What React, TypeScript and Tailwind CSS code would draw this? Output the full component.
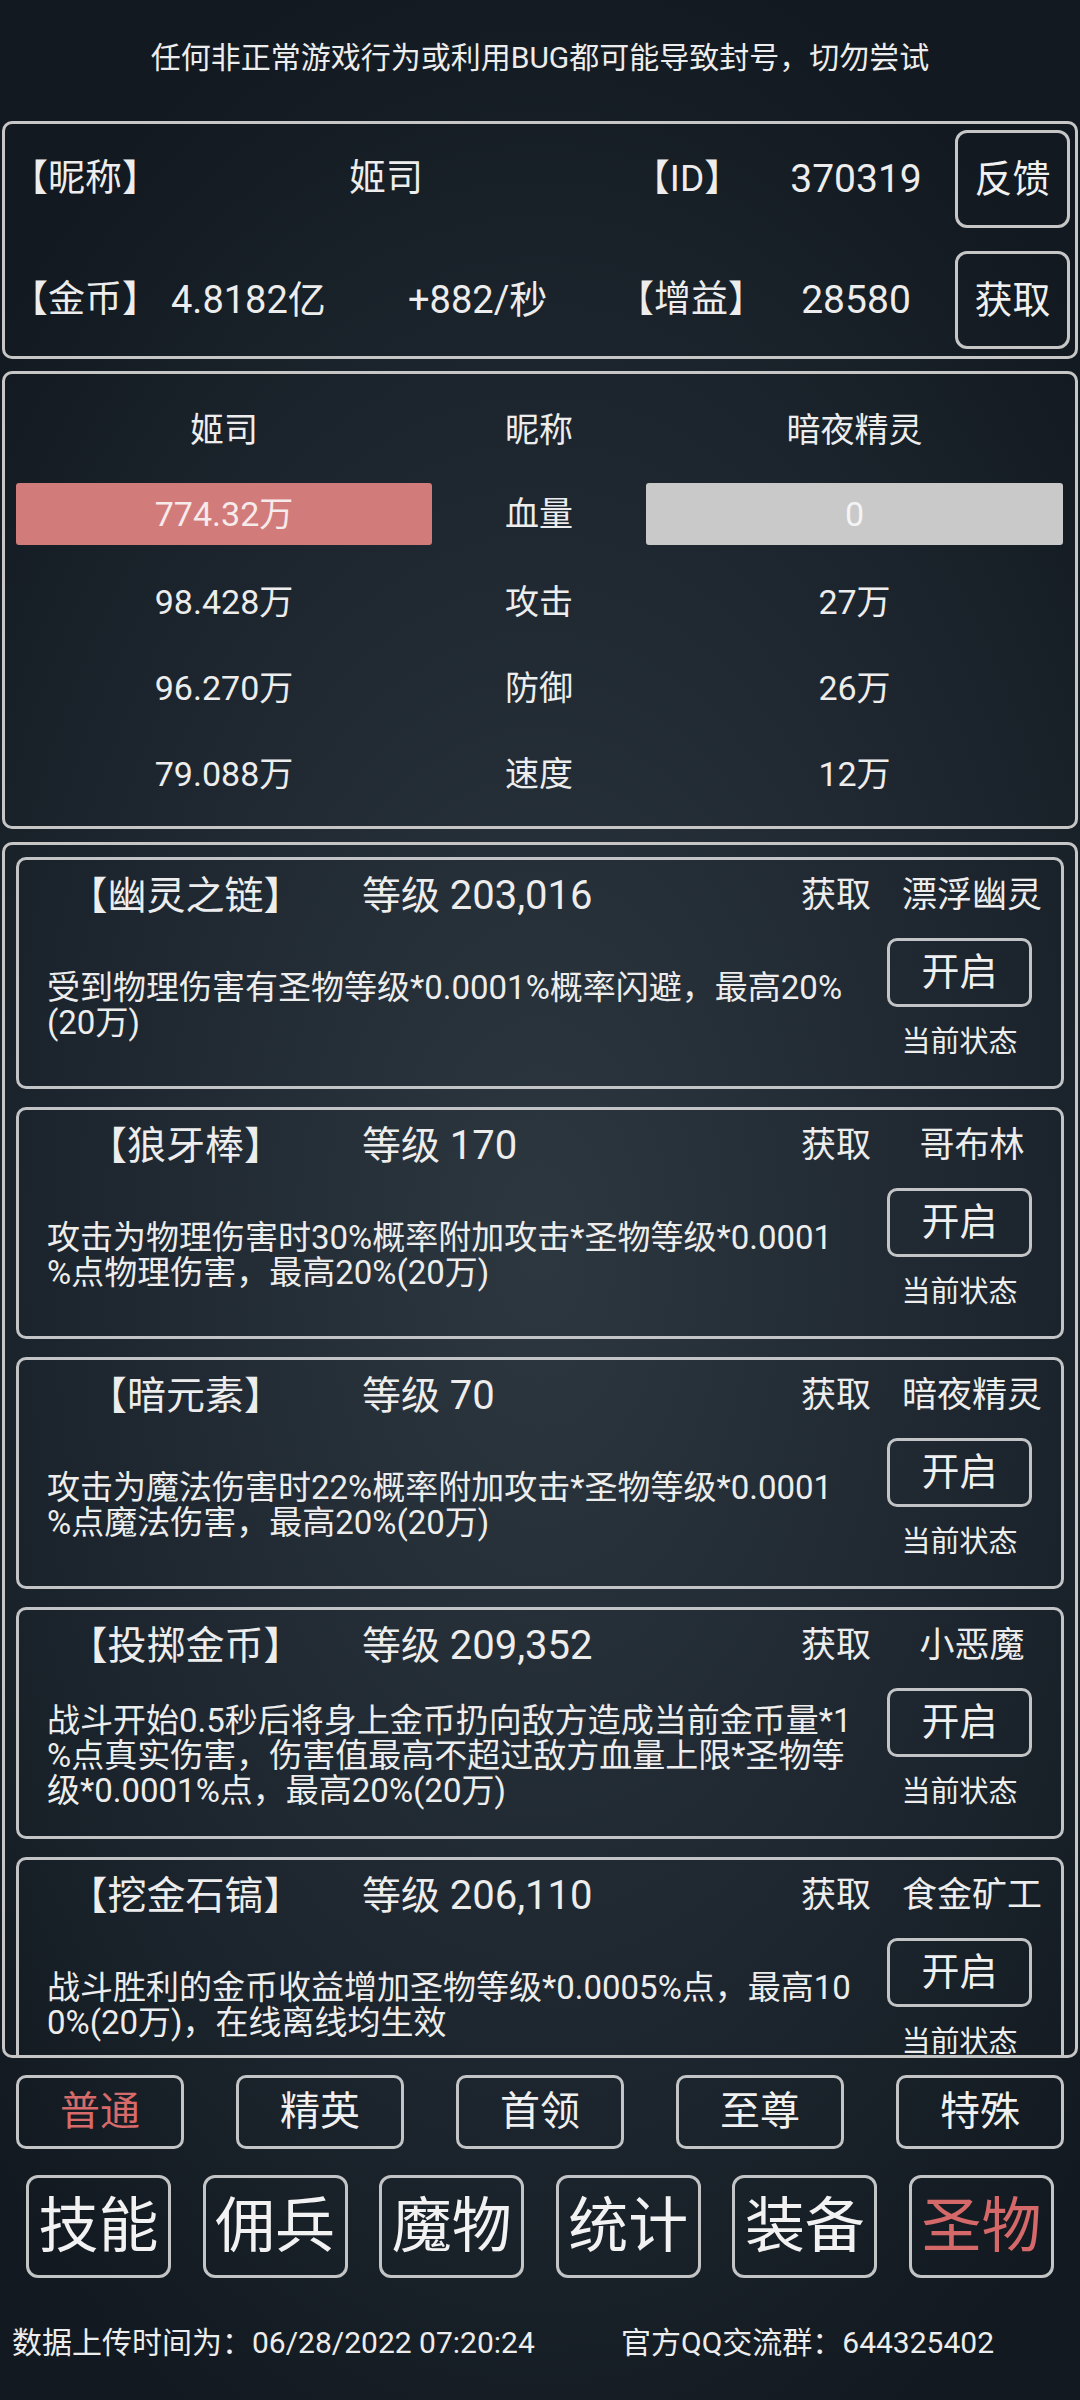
import React from 'react';

interface Relic {
  name: string;
  level: string;
  source: string;
  lines: string[];
}

const RELICS: Relic[] = [
  {
    name: '【幽灵之链】',
    level: '203,016',
    source: '漂浮幽灵',
    lines: ['受到物理伤害有圣物等级*0.0001%概率闪避，最高20%', '(20万)'],
  },
  {
    name: '【狼牙棒】',
    level: '170',
    source: '哥布林',
    lines: ['攻击为物理伤害时30%概率附加攻击*圣物等级*0.0001', '%点物理伤害，最高20%(20万)'],
  },
  {
    name: '【暗元素】',
    level: '70',
    source: '暗夜精灵',
    lines: ['攻击为魔法伤害时22%概率附加攻击*圣物等级*0.0001', '%点魔法伤害，最高20%(20万)'],
  },
  {
    name: '【投掷金币】',
    level: '209,352',
    source: '小恶魔',
    lines: [
      '战斗开始0.5秒后将身上金币扔向敌方造成当前金币量*1',
      '%点真实伤害，伤害值最高不超过敌方血量上限*圣物等',
      '级*0.0001%点，最高20%(20万)',
    ],
  },
  {
    name: '【挖金石镐】',
    level: '206,110',
    source: '食金矿工',
    lines: ['战斗胜利的金币收益增加圣物等级*0.0005%点，最高10', '0%(20万)，在线离线均生效'],
  },
];

const STATS = [
  { mine: '98.428万', label: '攻击', theirs: '27万' },
  { mine: '96.270万', label: '防御', theirs: '26万' },
  { mine: '79.088万', label: '速度', theirs: '12万' },
];

const TIERS = ['普通', '精英', '首领', '至尊', '特殊'];
const TABS = ['技能', '佣兵', '魔物', '统计', '装备', '圣物'];

function RelicCard({ relic }: { relic: Relic }) {
  return (
    <div className="mb-[18px] flex h-[232px] shrink-0 flex-col rounded-[10px] border-[3px] border-[#c2c4c6]">
      <div className="flex h-[72px] items-center whitespace-nowrap">
        <div className="w-[333px] text-center text-[39px]">{relic.name}</div>
        <div className="w-[449px] pl-[10px] text-[39px]">
          等级 <span className="text-[40px]">{relic.level}</span>
        </div>
        <div className="w-[99px] text-[35px]">获取</div>
        <div className="w-[144px] text-center text-[35px]">{relic.source}</div>
      </div>
      <div className="flex flex-1">
        <div className="flex flex-1 flex-col justify-center pb-[8px] pl-[28px] text-[33px] leading-[35px]">
          {relic.lines.map((l, i) => (
            <div key={i} className="whitespace-nowrap">{l}</div>
          ))}
        </div>
        <div className="mr-[29px] flex w-[145px] flex-col items-center">
          <button className="mt-[6px] flex h-[69px] w-[145px] items-center justify-center rounded-[10px] border-[3px] border-[#c2c4c6] text-[38px] text-[#f0f0f0]">
            开启
          </button>
          <div className="mt-[17px] text-[29px] leading-[36px]">当前状态</div>
        </div>
      </div>
    </div>
  );
}

export default function App() {
  return (
    <div className="h-[2400px] w-[1080px] overflow-hidden bg-[radial-gradient(ellipse_70%_55%_at_50%_52%,#2d3740_0%,#1f2831_55%,#121920_100%)] font-['Roboto','Noto_Sans_CJK_SC',sans-serif] text-[#ededed]">
      <div className="flex h-[121px] items-center justify-center pb-[6px] text-[30px]">
        任何非正常游戏行为或利用BUG都可能导致封号，切勿尝试
      </div>

      {/* player info */}
      <div className="mx-[2px] flex h-[238px] flex-col rounded-[10px] border-[3px] border-[#c6c6c6] pl-[6px] pt-[6px]">
        <div className="flex h-[98px] items-center whitespace-nowrap text-[37px]">
          <div className="w-[144px]">【昵称】</div>
          <div className="w-[462px] text-center">姬司</div>
          <div className="w-[140px] text-center">【ID】</div>
          <div className="w-[198px] text-center text-[39px]">370319</div>
          <button className="flex h-[98px] w-[115px] items-center justify-center rounded-[12px] border-[3px] border-[#c6c6c6] text-[38px] text-[#f0f0f0]">
            反馈
          </button>
        </div>
        <div className="mt-[23px] flex h-[98px] items-center whitespace-nowrap text-[37px]">
          <div className="w-[144px]">【金币】</div>
          <div className="flex w-[462px]">
            <span className="w-[253px] pl-[16px] text-[38px]">4.8182亿</span>
            <span className="text-[38px]">+882/秒</span>
          </div>
          <div className="w-[140px] text-center">【增益】</div>
          <div className="w-[198px] text-center text-[39px]">28580</div>
          <button className="flex h-[98px] w-[115px] items-center justify-center rounded-[12px] border-[3px] border-[#c6c6c6] text-[38px] text-[#f0f0f0]">
            获取
          </button>
        </div>
      </div>

      {/* battle stats */}
      <div className="mx-[2px] mt-[12px] flex h-[458px] flex-col rounded-[10px] border-[3px] border-[#c6c6c6] pl-[11px] pt-[13px] text-[34px]">
        <div className="flex h-[86px] items-center">
          <div className="w-[416px] text-center">姬司</div>
          <div className="w-[214px] text-center">昵称</div>
          <div className="w-[417px] text-center">暗夜精灵</div>
        </div>
        <div className="flex h-[86px] items-center pb-[4px]">
          <div className="flex h-[62px] w-[416px] items-center justify-center rounded-[3px] bg-[#d27b7b] text-[#f7eaea]">
            774.32万
          </div>
          <div className="w-[214px] text-center">血量</div>
          <div className="flex h-[62px] w-[417px] items-center justify-center rounded-[3px] bg-[#c9c9c9] text-[#f4f4f4]">
            0
          </div>
        </div>
        {STATS.map(s => (
          <div key={s.label} className="flex h-[86px] items-center">
            <div className="w-[416px] text-center">{s.mine}</div>
            <div className="w-[214px] text-center">{s.label}</div>
            <div className="w-[417px] text-center">{s.theirs}</div>
          </div>
        ))}
      </div>

      {/* relic list */}
      <div className="mx-[2px] mt-[13px] h-[1216px] rounded-[10px] border-[3px] border-[#c6c6c6]">
        <div className="flex h-[1210px] flex-col overflow-hidden px-[11px] pt-[12px]">
          {RELICS.map(r => (
            <RelicCard key={r.name} relic={r} />
          ))}
        </div>
      </div>

      {/* tiers */}
      <div className="mt-[17px] flex justify-between px-[16px]">
        {TIERS.map((t, i) => (
          <button
            key={t}
            className={`flex h-[74px] w-[168px] items-center justify-center rounded-[10px] border-[3px] border-[#c2c4c6] text-[40px] ${i === 0 ? 'text-[#d76a6a]' : 'text-[#f0f0f0]'}`}
          >
            {t}
          </button>
        ))}
      </div>

      {/* tabs */}
      <div className="mt-[26px] flex justify-between px-[26px]">
        {TABS.map((t, i) => (
          <button
            key={t}
            className={`flex h-[103px] w-[145px] items-center justify-center rounded-[12px] border-[3px] border-[#c2c4c6] text-[60px] ${i === TABS.length - 1 ? 'text-[#d56868]' : 'text-[#f2f2f2]'}`}
          >
            {t}
          </button>
        ))}
      </div>

      <div className="mt-[44px] flex h-[40px] items-center whitespace-nowrap text-[30px]">
        <span className="w-[621px] pl-[12px]">数据上传时间为：06/28/2022 07:20:24</span>
        <span>官方QQ交流群：644325402</span>
      </div>
    </div>
  );
}
